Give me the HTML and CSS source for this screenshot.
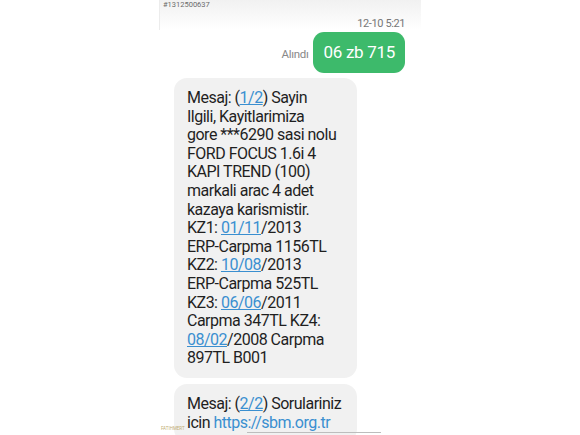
FILE: index.html
```html
<!DOCTYPE html>
<html lang="tr">
<head>
    <meta charset="UTF-8" />
    <meta name="viewport" content="width=device-width, initial-scale=1.0" />
    <title>Mesajlar</title>
    <link rel="stylesheet" href="styles.css">
</head>
<body>
<div class="screen">
    <div class="top">
        <div class="sender">#1312500637</div>
        <div class="time">12-10 5:21</div>
    </div>

    <div class="sent-row">
        <span class="status">Alındı</span>
        <div class="bubble-sent">06 zb 715</div>
    </div>

    <div class="bubble">
        Mesaj: (<a href="#">1/2</a>) Sayin<br>
        Ilgili, Kayitlarimiza<br>
        gore ***6290 sasi nolu<br>
        FORD FOCUS 1.6i 4<br>
        KAPI TREND (100)<br>
        markali arac 4 adet<br>
        kazaya karismistir.<br>
        KZ1: <a href="#">01/11</a>/2013<br>
        ERP-Carpma 1156TL<br>
        KZ2: <a href="#">10/08</a>/2013<br>
        ERP-Carpma 525TL<br>
        KZ3: <a href="#">06/06</a>/2011<br>
        Carpma 347TL KZ4:<br>
        <a href="#">08/02</a>/2008 Carpma<br>
        897TL B001
    </div>

    <div class="bubble">
        Mesaj: (<a href="#">2/2</a>) Sorulariniz<br>
        icin <a href="#" class="plain">https://sbm.org.tr</a>
    </div>

    <div class="divider"></div>
    <div class="watermark">FATIHMERT</div>
</div>
</body>
</html>
```

FILE: styles.css
```css
body {
    margin: 0;
    background: #fff;
    font-family: Roboto, "Noto Sans", sans-serif;
    overflow: hidden;
}
.screen {
    position: relative;
    width: 262px;
    height: 435px;
    margin: 0 auto;
    overflow: hidden;
}
.top {
    height: 30px;
    background: linear-gradient(#f1f1f1, #fbfbfb 70%, #fff);
    border-left: 1px solid #ececec;
}
.sender {
    font-size: 7.5px;
    color: #6a6a6a;
    padding-left: 3px;
    line-height: 9px;
}
.time {
    font-size: 11px;
    letter-spacing: -0.4px;
    color: #777;
    text-align: right;
    padding-right: 16px;
    margin-top: 8px;
}
.sent-row {
    display: flex;
    justify-content: flex-end;
    align-items: center;
    gap: 4px;
    padding-right: 16px;
    margin-top: 2px;
}
.status {
    font-size: 11.5px;
    letter-spacing: -0.3px;
    color: #888;
    margin-top: 3px;
}
.bubble-sent {
    background: #3dba6b;
    color: #fff;
    font-size: 17px;
    letter-spacing: -0.3px;
    height: 41px;
    line-height: 41px;
    padding: 0 10px 0 11px;
    border-radius: 11px;
}
.bubble {
    width: 183px;
    box-sizing: border-box;
    margin: 5px 0 0 15px;
    padding: 11px 6px 10px 13px;
    background: #f1f1f1;
    border-radius: 13px;
    font-size: 16px;
    letter-spacing: -0.5px;
    line-height: 18.6px;
    color: #1f1f1f;
    white-space: nowrap;
}
.bubble + .bubble {
    margin-top: 6px;
}
.bubble a {
    color: #3a8fd0;
    text-decoration: underline;
}
.bubble a.plain {
    text-decoration: none;
}
.divider {
    position: absolute;
    left: 88px;
    right: 40px;
    top: 432px;
    height: 1px;
    background: #bdbdbd;
}
.watermark {
    position: absolute;
    left: 2px;
    top: 426px;
    font-size: 4.5px;
    color: #c2ae74;
}
```
